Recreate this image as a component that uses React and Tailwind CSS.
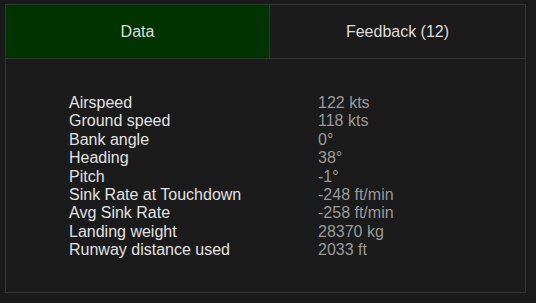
const rows = [
  ["Airspeed", "122 kts"],
  ["Ground speed", "118 kts"],
  ["Bank angle", "0°"],
  ["Heading", "38°"],
  ["Pitch", "-1°"],
  ["Sink Rate at Touchdown", "-248 ft/min"],
  ["Avg Sink Rate", "-258 ft/min"],
  ["Landing weight", "28370 kg"],
  ["Runway distance used", "2033 ft"],
];

export default function App() {
  return (
    <div
      className="min-h-screen bg-[#1a1a1a] pt-[4px] pl-[5px]"
      style={{ fontFamily: '"Liberation Sans", Arial, sans-serif' }}
    >
      <div className="w-[521px] h-[289px] border border-[#353535] bg-[#1b1b1b] flex flex-col">
        <div className="flex h-[54px] border-b border-[#353535]">
          <button className="w-[264px] pt-[1px] bg-[#003300] border-r border-[#353535] text-[16px] text-[#dedede]">
            Data
          </button>
          <button className="flex-1 pt-[1px] text-[16px] text-[#dedede]">
            Feedback (12)
          </button>
        </div>
        <div className="pt-[35px] pl-[63px]">
          <table className="text-[16px] leading-[18.4px]">
            <tbody>
              {rows.map(([label, value]) => (
                <tr key={label}>
                  <td className="w-[249px] p-0 text-[#e2e2e2]">{label}</td>
                  <td className="p-0 text-[#9a9a9a]">{value}</td>
                </tr>
              ))}
            </tbody>
          </table>
        </div>
      </div>
    </div>
  );
}
